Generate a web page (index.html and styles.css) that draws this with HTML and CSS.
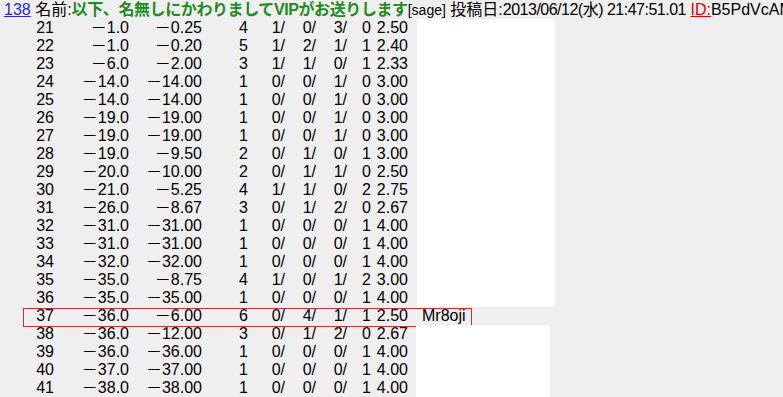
FILE: index.html
```html
<!DOCTYPE html>
<html lang="ja">
<head>
<meta charset="utf-8">
<link rel="stylesheet" href="styles.css">
</head>
<body>
<div class="post">
  <div class="head"><a class="num" href="#">138</a> 名前:<b class="name">以下、名無しにかわりましてVIPがお送りします</b><span class="mail">[sage]</span> 投稿日:<span class="date">2013/06/12(水) 21:47:51.01</span> <a class="id" href="#">ID:</a>B5PdVcAM</div>
  <div class="rows">
    <div class="row"><span>21</span><span>－1.0</span><span>－0.25</span><span>4</span><span>1/</span><span>0/</span><span>3/</span><span>0</span><span>2.50</span><span class="blank"></span></div>
    <div class="row"><span>22</span><span>－1.0</span><span>－0.20</span><span>5</span><span>1/</span><span>2/</span><span>1/</span><span>1</span><span>2.40</span><span class="blank"></span></div>
    <div class="row"><span>23</span><span>－6.0</span><span>－2.00</span><span>3</span><span>1/</span><span>1/</span><span>0/</span><span>1</span><span>2.33</span><span class="blank"></span></div>
    <div class="row"><span>24</span><span>－14.0</span><span>－14.00</span><span>1</span><span>0/</span><span>0/</span><span>1/</span><span>0</span><span>3.00</span><span class="blank"></span></div>
    <div class="row"><span>25</span><span>－14.0</span><span>－14.00</span><span>1</span><span>0/</span><span>0/</span><span>1/</span><span>0</span><span>3.00</span><span class="blank"></span></div>
    <div class="row"><span>26</span><span>－19.0</span><span>－19.00</span><span>1</span><span>0/</span><span>0/</span><span>1/</span><span>0</span><span>3.00</span><span class="blank"></span></div>
    <div class="row"><span>27</span><span>－19.0</span><span>－19.00</span><span>1</span><span>0/</span><span>0/</span><span>1/</span><span>0</span><span>3.00</span><span class="blank"></span></div>
    <div class="row"><span>28</span><span>－19.0</span><span>－9.50</span><span>2</span><span>0/</span><span>1/</span><span>0/</span><span>1</span><span>3.00</span><span class="blank"></span></div>
    <div class="row"><span>29</span><span>－20.0</span><span>－10.00</span><span>2</span><span>0/</span><span>1/</span><span>1/</span><span>0</span><span>2.50</span><span class="blank"></span></div>
    <div class="row"><span>30</span><span>－21.0</span><span>－5.25</span><span>4</span><span>1/</span><span>1/</span><span>0/</span><span>2</span><span>2.75</span><span class="blank"></span></div>
    <div class="row"><span>31</span><span>－26.0</span><span>－8.67</span><span>3</span><span>0/</span><span>1/</span><span>2/</span><span>0</span><span>2.67</span><span class="blank"></span></div>
    <div class="row"><span>32</span><span>－31.0</span><span>－31.00</span><span>1</span><span>0/</span><span>0/</span><span>0/</span><span>1</span><span>4.00</span><span class="blank"></span></div>
    <div class="row"><span>33</span><span>－31.0</span><span>－31.00</span><span>1</span><span>0/</span><span>0/</span><span>0/</span><span>1</span><span>4.00</span><span class="blank"></span></div>
    <div class="row"><span>34</span><span>－32.0</span><span>－32.00</span><span>1</span><span>0/</span><span>0/</span><span>0/</span><span>1</span><span>4.00</span><span class="blank"></span></div>
    <div class="row"><span>35</span><span>－35.0</span><span>－8.75</span><span>4</span><span>1/</span><span>0/</span><span>1/</span><span>2</span><span>3.00</span><span class="blank"></span></div>
    <div class="row"><span>36</span><span>－35.0</span><span>－35.00</span><span>1</span><span>0/</span><span>0/</span><span>0/</span><span>1</span><span>4.00</span><span class="blank"></span></div>
    <div class="row hl"><span>37</span><span>－36.0</span><span>－6.00</span><span>6</span><span>0/</span><span>4/</span><span>1/</span><span>1</span><span>2.50</span><span class="who">Mr8oji</span></div>
    <div class="row low"><span>38</span><span>－36.0</span><span>－12.00</span><span>3</span><span>0/</span><span>1/</span><span>2/</span><span>0</span><span>2.67</span><span class="blank"></span></div>
    <div class="row low"><span>39</span><span>－36.0</span><span>－36.00</span><span>1</span><span>0/</span><span>0/</span><span>0/</span><span>1</span><span>4.00</span><span class="blank"></span></div>
    <div class="row low"><span>40</span><span>－37.0</span><span>－37.00</span><span>1</span><span>0/</span><span>0/</span><span>0/</span><span>1</span><span>4.00</span><span class="blank"></span></div>
    <div class="row low"><span>41</span><span>－38.0</span><span>－38.00</span><span>1</span><span>0/</span><span>0/</span><span>0/</span><span>1</span><span>4.00</span><span class="blank"></span></div>
  </div>
</div>
</body>
</html>
```

FILE: styles.css
```css
html, body {
  margin: 0;
  padding: 0;
  background: #efefef;
  overflow: hidden;
}
body {
  font-family: "Liberation Sans", "Noto Sans CJK JP", sans-serif;
  font-size: 16px;
  color: #000;
}
.head {
  height: 19px;
  line-height: 19px;
  padding-left: 4px;
  white-space: nowrap;
}
.num {
  color: #2a2ad0;
  text-decoration: underline;
}
.name {
  color: #228b22;
  font-weight: bold;
  letter-spacing: -0.4px;
}
.mail {
  font-size: 14px;
}
.date {
  letter-spacing: -0.5px;
}
.id {
  color: #e00000;
  text-decoration: underline;
}
.rows {
  display: flex;
  flex-direction: column;
}
.row {
  display: grid;
  grid-template-columns: 54px 75px 73px 46px 37px 31px 31px 24px 37px 9px 138px;
  height: 18px;
  line-height: 18px;
  white-space: nowrap;
  position: relative;
}
.row > span {
  text-align: right;
}
.row > .blank {
  grid-column: 11;
  background: #fff;
}
.row.low > .blank {
  margin-left: -1px;
  margin-right: 5px;
}
.row > .who {
  grid-column: 11 / span 1;
  text-align: left;
  padding-left: 5px;
}
.row.hl::before {
  content: "";
  position: absolute;
  left: 23px;
  top: 1px;
  width: 449px;
  height: 19px;
  box-sizing: border-box;
  border: 1px solid #c8303c;
}
```
